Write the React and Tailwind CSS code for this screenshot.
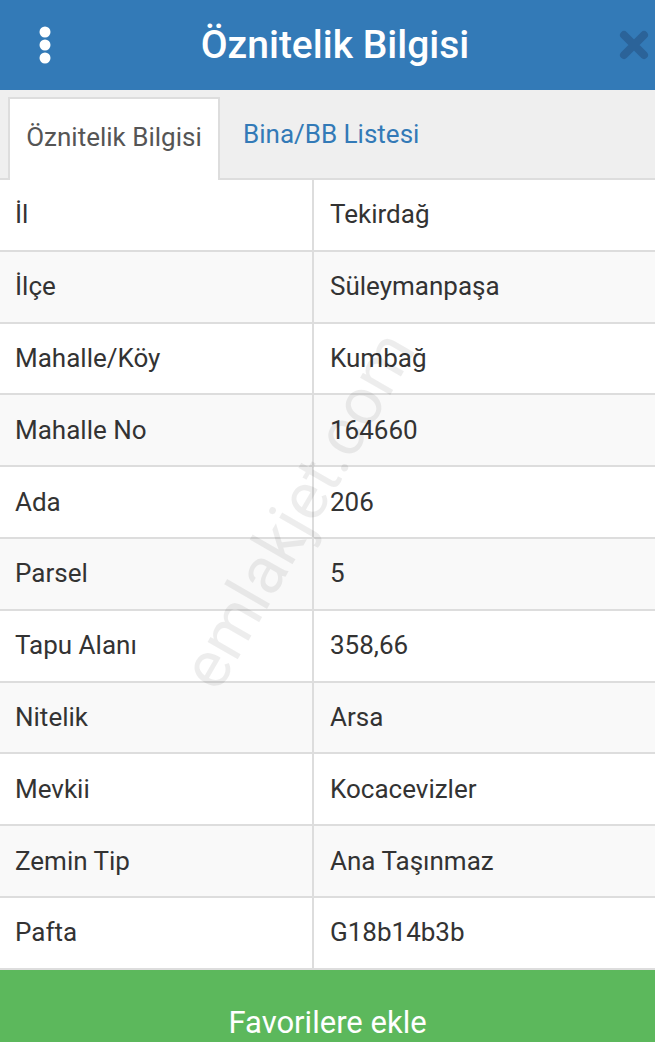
import React from 'react';

const rows = [
  ['İl', 'Tekirdağ'],
  ['İlçe', 'Süleymanpaşa'],
  ['Mahalle/Köy', 'Kumbağ'],
  ['Mahalle No', '164660'],
  ['Ada', '206'],
  ['Parsel', '5'],
  ['Tapu Alanı', '358,66'],
  ['Nitelik', 'Arsa'],
  ['Mevkii', 'Kocacevizler'],
  ['Zemin Tip', 'Ana Taşınmaz'],
  ['Pafta', 'G18b14b3b'],
];

function MoreIcon() {
  return (
    <svg width="14" height="40" viewBox="0 0 14 40">
      <circle cx="7" cy="7" r="5.5" fill="#fff" />
      <circle cx="7" cy="20" r="5.5" fill="#fff" />
      <circle cx="7" cy="33" r="5.5" fill="#fff" />
    </svg>
  );
}

function CloseIcon() {
  return (
    <svg width="30" height="30" viewBox="0 0 30 30">
      <path d="M5 5 L25 25 M25 5 L5 25" stroke="#2b6399" strokeWidth="8" strokeLinecap="round" />
    </svg>
  );
}

export default function App() {
  return (
    <div className="w-[655px] h-[1042px] overflow-hidden bg-white font-['Roboto',sans-serif] relative">
      {/* title bar */}
      <div className="h-[90px] bg-[#337ab7] flex items-center">
        <div className="w-[90px] flex justify-center">
          <MoreIcon />
        </div>
        <div className="flex-1 text-center text-white text-[39px] font-medium ml-[15px]">Öznitelik Bilgisi</div>
        <div className="w-[90px] flex justify-end pr-[6px]">
          <CloseIcon />
        </div>
      </div>

      {/* tabs */}
      <div className="h-[90px] bg-[#efefef] flex items-end pl-[8px] border-b-2 border-[#dddddd]">
        <div className="h-[83px] w-[212px] bg-white border-2 border-b-0 border-[#dddddd] flex items-center justify-center pb-[4px] text-[26px] text-[#555] -mb-[2px]">
          Öznitelik Bilgisi
        </div>
        <div className="h-[83px] flex items-center pl-[23px] pb-[4px] text-[26px] text-[#337ab7]">
          Bina/BB Listesi
        </div>
      </div>

      {/* attribute table */}
      <div className="flex flex-col">
        {rows.map(([k, v], i) => (
          <div
            key={k}
            className={`h-[71.8px] flex border-b-2 border-[#dddddd] text-[26px] text-[#333] ${i % 2 === 1 ? 'bg-[#f9f9f9]' : 'bg-white'}`}
          >
            <div className="w-[314px] border-r-2 border-[#dddddd] flex items-center pl-[15px]">{k}</div>
            <div className="flex-1 flex items-center pl-[16px]">{v}</div>
          </div>
        ))}
      </div>

      <div className="h-[76px] bg-[#5cb85c] flex items-center justify-center pt-[30px] text-white text-[31px]">
        Favorilere ekle
      </div>

      {/* watermark */}
      <div className="absolute left-[298px] top-[510px] -translate-x-1/2 -translate-y-1/2 -rotate-[60deg] text-[66px] text-[#000]/[0.07] whitespace-nowrap pointer-events-none">
        emlakjet.com
      </div>
    </div>
  );
}
